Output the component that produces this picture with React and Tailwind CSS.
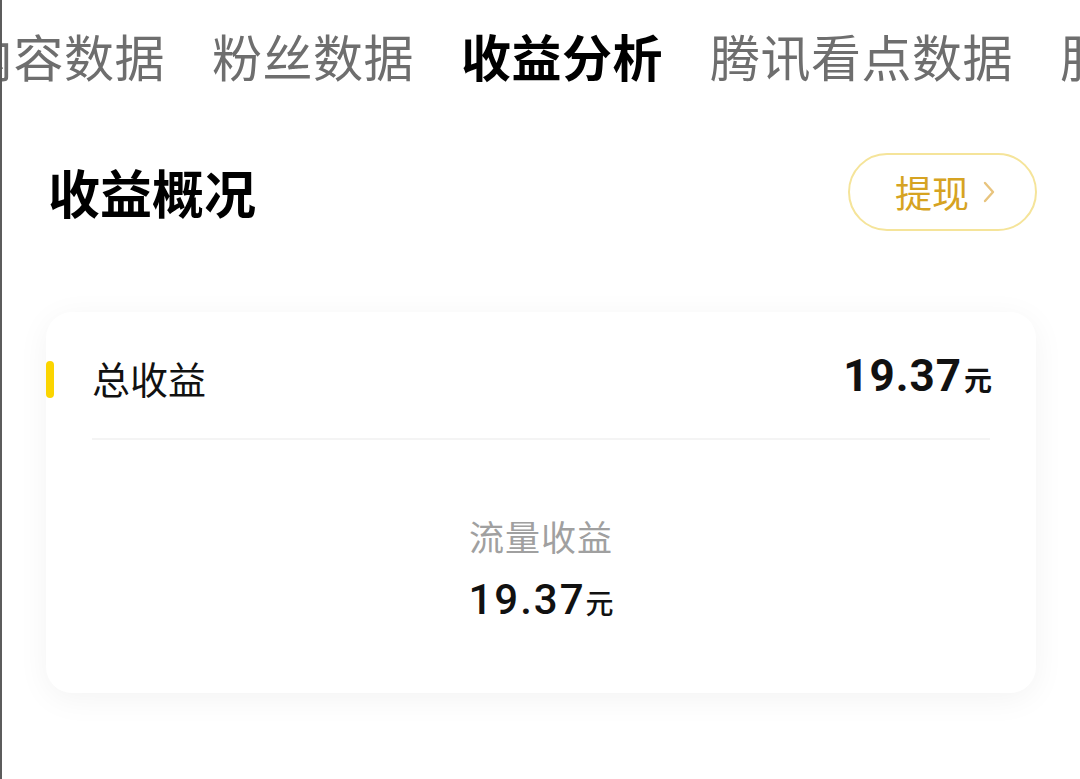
const tabs = [
	{ label: '内容数据' },
	{ label: '粉丝数据' },
	{ label: '收益分析', active: true },
	{ label: '腾讯看点数据' },
	{ label: '服务数据' },
];

const cjk = { fontFamily: '"Noto Sans CJK SC", "Noto Sans", sans-serif' };
const num = { fontFamily: 'Roboto, "Noto Sans CJK SC", sans-serif' };

export default function App() {
	return (
		<div
			className="w-[1080px] h-[779px] bg-white border-l-2 border-[#5c5c5c] overflow-hidden"
			style={cjk}>
			<nav className="h-[110px] flex items-center overflow-hidden">
				<div className="flex gap-[47px] ml-[-39px] whitespace-nowrap">
					{tabs.map((t) => (
						<span
							key={t.label}
							className={
								t.active
									? 'text-[50px] leading-none font-bold text-black tracking-[0.5px]'
									: 'text-[50px] leading-none text-[#6e6e6e] tracking-[0.5px]'
							}>
							{t.label}
						</span>
					))}
				</div>
			</nav>

			<div className="flex items-center justify-between pl-[46px] pr-[43px] mt-[43px] h-[78px]">
				<h1 className="text-[52px] leading-none font-bold text-black">收益概况</h1>
				<button
					type="button"
					className="h-[78px] w-[189px] rounded-full border-2 border-[#f5e49a] flex items-center justify-center gap-[13px] pl-[6px] text-[#d6a322]">
					<span className="text-[37px] leading-none">提现</span>
					<svg width="14" height="24" viewBox="0 0 14 24" fill="none">
						<path d="M3 3l8 9-8 9" stroke="#e8c47e" strokeWidth="2.4" strokeLinecap="round" strokeLinejoin="round" />
					</svg>
				</button>
			</div>

			<section className="mt-[81px] ml-[44px] w-[990px] h-[381px] rounded-[26px] bg-white shadow-[0_6px_32px_rgba(0,0,0,0.05)] flex flex-col">
				<div className="h-[126px] flex items-center pr-[44px]">
					<div className="w-[8px] h-[37px] rounded-full bg-[#fbd500] mt-[8px]" />
					<span className="ml-[38px] text-[38px] leading-none text-[#111] mt-[6px]">总收益</span>
					<span className="ml-auto flex items-baseline mt-[2px]">
						<span className="text-[44px] leading-none font-bold text-[#111] tracking-[1px]" style={num}>
							19.37
						</span>
						<span className="text-[28px] leading-none font-bold text-[#111] ml-[2px]">元</span>
					</span>
				</div>
				<div className="mx-[46px] h-[2px] bg-[#f4f4f4]" />
				<div className="flex flex-col items-center mt-[78px]">
					<span className="text-[35px] leading-none text-[#a0a0a0] tracking-[1px]">流量收益</span>
					<span className="flex items-baseline mt-[26px]">
						<span className="text-[42px] leading-none font-medium text-[#111] tracking-[2px]" style={num}>
							19.37
						</span>
						<span className="text-[28px] leading-none font-medium text-[#111]">元</span>
					</span>
				</div>
			</section>
		</div>
	);
}
